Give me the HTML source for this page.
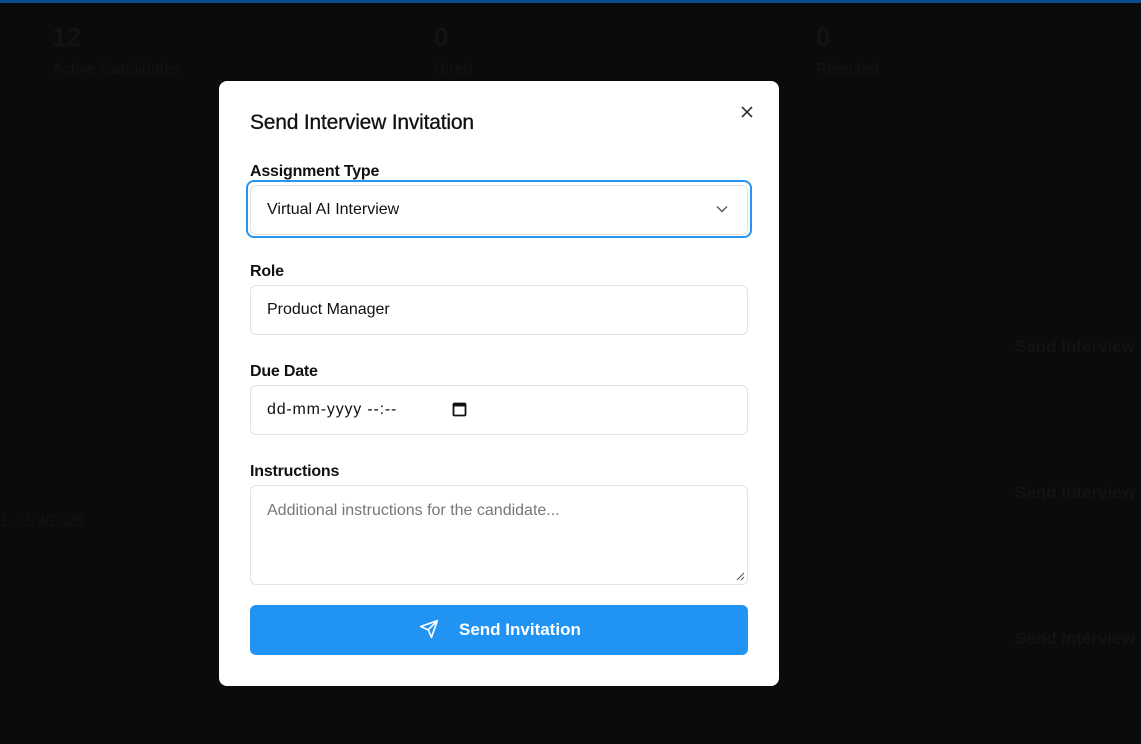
<!DOCTYPE html>
<html><head><meta charset="utf-8"><style>
*{box-sizing:border-box;margin:0;padding:0}
body{width:1141px;height:744px;background:#0b0b0b;font-family:"Liberation Sans",sans-serif;position:relative;overflow:hidden}
.top{position:absolute;left:0;top:0;width:1141px;height:3px;background:#0b4a8c}
.bg{position:absolute;color:#131313}
.modal{position:absolute;left:219px;top:81px;width:560px;height:605px;background:#fff;border-radius:8px}
.abs{position:absolute}
.lbl{position:absolute;left:31px;font-size:16px;font-weight:bold;color:#111;letter-spacing:-0.2px}
.fld{position:absolute;left:31px;width:498px;height:50px;border:1px solid #e3e3e3;border-radius:6px;font-size:16px;color:#111;padding-left:16px;line-height:48px}
</style></head><body>
<div class="top"></div>
<div class="bg" style="left:52px;top:22px;font-size:26px;font-weight:bold">12</div>
<div class="bg" style="left:52px;top:61px;font-size:16px">Active Candidates</div>
<div class="bg" style="left:434px;top:22px;font-size:26px;font-weight:bold">0</div>
<div class="bg" style="left:434px;top:61px;font-size:16px">Hired</div>
<div class="bg" style="left:816px;top:22px;font-size:26px;font-weight:bold">0</div>
<div class="bg" style="left:816px;top:61px;font-size:16px">Rejected</div>
<div class="bg" style="left:1015px;top:337px;font-size:17px;font-weight:bold;white-space:nowrap">Send Interview I</div>
<div class="bg" style="left:1015px;top:483px;font-size:17px;font-weight:bold;white-space:nowrap">Send Interview I</div>
<div class="bg" style="left:1015px;top:629px;font-size:17px;font-weight:bold;white-space:nowrap">Send Interview I</div>
<div class="bg" style="left:0;top:513px;font-size:16px">1 &nbsp; 3/3/2025</div>
<div class="modal">
  <svg class="abs" style="left:521px;top:24px" width="14" height="14" viewBox="0 0 14 14"><path d="M2 2L12 12M12 2L2 12" stroke="#333" stroke-width="1.6"/></svg>
  <div class="abs" style="left:31px;top:30px;font-size:21px;color:#111;letter-spacing:-0.2px;-webkit-text-stroke:0.3px #111">Send Interview Invitation</div>
  <div class="lbl" style="top:82px">Assignment Type</div>
  <div class="abs" style="left:27px;top:99px;width:506px;height:58px;border:2px solid #2a93ee;border-radius:8px"></div>
  <div class="fld" style="top:104px">Virtual AI Interview
    <svg class="abs" style="left:465px;top:19px" width="12" height="8" viewBox="0 0 12 8"><path d="M1 1.5L6 6.5L11 1.5" stroke="#555" stroke-width="1.4" fill="none"/></svg>
  </div>
  <div class="lbl" style="top:182px">Role</div>
  <div class="fld" style="top:204px">Product Manager</div>
  <div class="lbl" style="top:282px">Due Date</div>
  <div class="fld" style="top:304px;letter-spacing:0.8px">dd-mm-yyyy --:--
    <svg class="abs" style="left:201px;top:15px" width="15" height="16" viewBox="0 0 15 16"><rect x="1.5" y="2.5" width="12" height="12" rx="1" stroke="#111" stroke-width="1.8" fill="none"/><rect x="1.5" y="2.5" width="12" height="3" fill="#111"/></svg>
  </div>
  <div class="lbl" style="top:382px">Instructions</div>
  <div class="fld" style="top:404px;height:100px;line-height:20px;padding-top:15px;color:#777">Additional instructions for the candidate...
    <svg class="abs" style="left:485px;top:86px" width="9" height="9" viewBox="0 0 9 9"><path d="M8 1L1 8M8 5L5 8" stroke="#555" stroke-width="1"/></svg>
  </div>
  <div class="abs" style="left:31px;top:524px;width:498px;height:50px;background:#2194f3;border-radius:6px"></div>
  <svg class="abs" style="left:200px;top:538px" width="20" height="20" viewBox="0 0 24 24"><path d="M22 2L11 13M22 2L15 22L11 13L2 9Z" stroke="#fff" stroke-width="2" fill="none" stroke-linejoin="round"/></svg>
  <div class="abs" style="left:240px;top:539px;font-size:17px;font-weight:bold;color:#fff">Send Invitation</div>
</div>
</body></html>
